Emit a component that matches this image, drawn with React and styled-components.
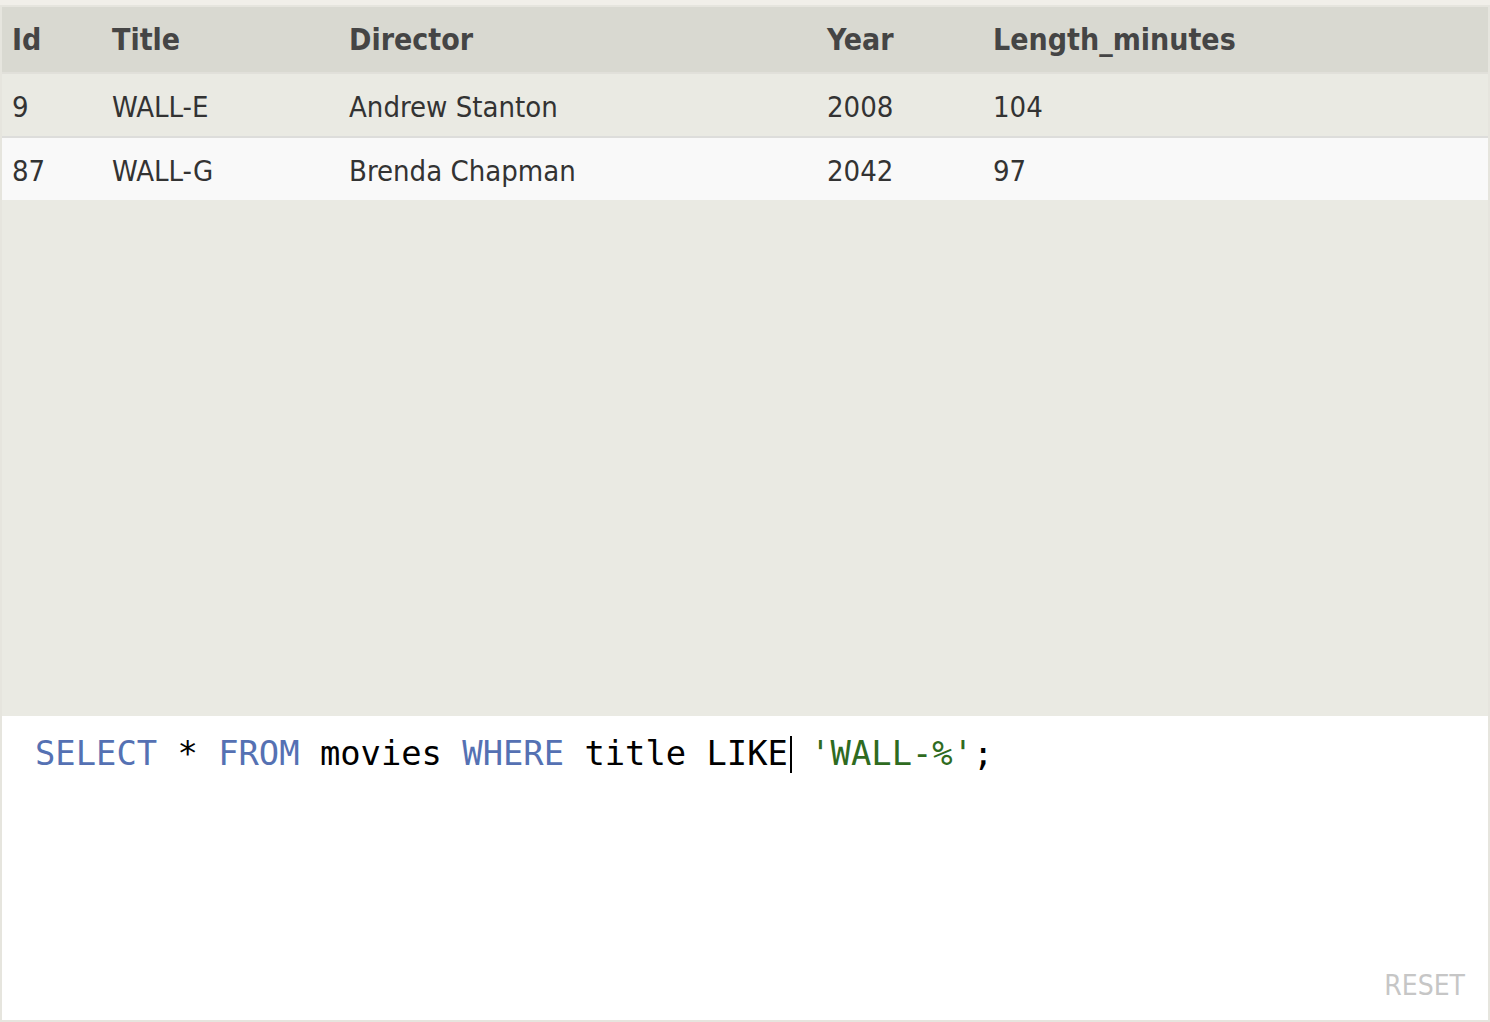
import styled, { createGlobalStyle } from "styled-components";

const GlobalStyle = createGlobalStyle`
    html, body {
        margin: 0;
        padding: 0;
        background: #f1efe9;
    }
    #root {
        height: 1022px;
    }
`

const Page = styled.div`
    box-sizing: border-box;
    height: 1022px;
    padding-top: 5px;
`

const Frame = styled.div`
    box-sizing: border-box;
    height: 100%;
    border: 2px solid #e6e5de;
    display: flex;
    flex-direction: column;
    background: #eaeae3;
`

const Results = styled.div`
    flex: 1;
    background: #eaeae3;
    overflow: hidden;
`

const Table = styled.table`
    width: 100%;
    border-collapse: separate;
    border-spacing: 0;
    table-layout: fixed;
    font-family: "DejaVu Sans Condensed", "DejaVu Sans", Verdana, sans-serif;
    font-stretch: condensed;
`

const HeadCell = styled.th`
    width: ${(props) => props.w ? props.w + "px" : "auto"};
    height: 67px;
    padding: 0 10px;
    text-align: left;
    font-size: 30px;
    font-weight: bold;
    color: #454545;
    background: #d9d9d1;
    border-bottom: 2px solid #e1e0da;
    box-sizing: border-box;
`

const Row = styled.tr`
    background: ${(props) => props.even ? "#f9f9f9" : "#eaeae3"};
`

const Cell = styled.td`
    height: ${(props) => props.last ? "62px" : "64px"};
    padding: 4px 10px 0;
    font-size: 29px;
    color: #333;
    box-sizing: border-box;
    border-bottom: ${(props) => props.last ? "none" : "2px solid #dddddb"};
`

const Editor = styled.div`
    height: 304px;
    background: #fff;
    display: flex;
    flex-direction: column;
    padding: 18px 23px 18px 33px;
    box-sizing: border-box;
`

const Code = styled.div`
    font-family: "DejaVu Sans Mono", "Liberation Mono", monospace;
    font-size: 33.8px;
    line-height: 40px;
    color: #000;
    white-space: pre;
`

const Keyword = styled.span`
    color: #5571b3;
`

const Str = styled.span`
    color: #2f6b1f;
`

const Caret = styled.span`
    display: inline-block;
    width: 0;
    height: 37px;
    margin-left: 2px;
    border-left: 2px solid #000;
    margin-right: -2px;
    vertical-align: -8px;
`

const ResetButton = styled.div`
    margin-top: auto;
    align-self: flex-end;
    font-family: "DejaVu Sans Condensed", "DejaVu Sans", Verdana, sans-serif;
    font-stretch: condensed;
    font-size: 28px;
    color: #c6c6c6;
    cursor: pointer;
`

const columns = [
    { name: "Id", w: 100 },
    { name: "Title", w: 237 },
    { name: "Director", w: 478 },
    { name: "Year", w: 166 },
    { name: "Length_minutes" },
]

const rows = [
    [9, "WALL-E", "Andrew Stanton", 2008, 104],
    [87, "WALL-G", "Brenda Chapman", 2042, 97],
]

const App = () => {
    return (
        <Page>
            <GlobalStyle />
            <Frame>
                <Results>
                    <Table>
                        <thead>
                            <tr>
                                {columns.map((c) => (
                                    <HeadCell key={c.name} w={c.w}>{c.name}</HeadCell>
                                ))}
                            </tr>
                        </thead>
                        <tbody>
                            {rows.map((r, i) => (
                                <Row key={r[0]} even={i % 2 === 1}>
                                    {r.map((v, j) => (
                                        <Cell key={j} last={i === rows.length - 1}>{v}</Cell>
                                    ))}
                                </Row>
                            ))}
                        </tbody>
                    </Table>
                </Results>

                <Editor>
                    <Code>
                        <Keyword>SELECT</Keyword> * <Keyword>FROM</Keyword> movies <Keyword>WHERE</Keyword> title LIKE<Caret /> <Str>'WALL-%'</Str>;
                    </Code>
                    <ResetButton>RESET</ResetButton>
                </Editor>
            </Frame>
        </Page>
    )
}
export default App;
